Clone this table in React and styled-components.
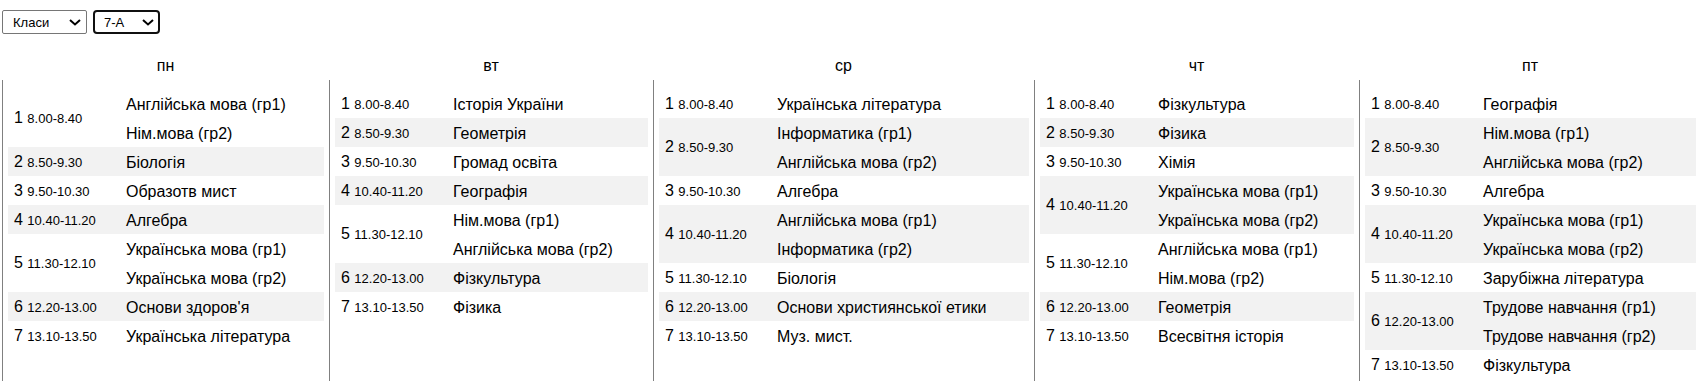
import React, { useState } from 'react';
import styled, { createGlobalStyle } from 'styled-components';

const GlobalStyle = createGlobalStyle`
html, body {
  margin: 0;
  padding: 0;
  background: #fff;
}
body {
  font-family: "Liberation Sans", Arial, sans-serif;
  color: #000;
}
`;

const Page = styled.div`
display: flex;
flex-direction: column;
min-height: 100vh;
padding: 10px 0 0 2px;
box-sizing: border-box;
`;

const Toolbar = styled.div`
display: flex;
gap: 6px;
height: 24px;
`;

const SelectWrap = styled.div`
position: relative;
width: ${({ $width }) => $width}px;
height: 24px;
`;

const Select = styled.select`
appearance: none;
width: 100%;
height: 100%;
box-sizing: border-box;
margin: 0;
padding: 0 0 0 ${({ $focused }) => ($focused ? 9 : 10)}px;
font-family: "Liberation Sans", Arial, sans-serif;
font-size: 13px;
color: #000;
background: #fff;
border: ${({ $focused }) => ($focused ? '2px solid #101010' : '1px solid #767676')};
border-radius: ${({ $focused }) => ($focused ? 4 : 2)}px;
outline: none;
`;

const Chevron = styled.svg`
position: absolute;
right: 6px;
top: 9px;
pointer-events: none;
`;

const Week = styled.div`
flex: 1;
display: grid;
grid-template-columns: 327px 324px 381px 325px 1fr;
`;

const DayColumn = styled.div`
display: flex;
flex-direction: column;
`;

const DayTitle = styled.div`
height: 46px;
box-sizing: border-box;
padding-top: 23px;
text-align: center;
font-size: 16px;
`;

const DayBody = styled.div`
flex: 1;
border-left: 1px solid #808080;
padding: 9px 5px 0 5px;
`;

const LessonRow = styled.div`
display: grid;
grid-template-columns: 118px 1fr;
background: ${({ $shaded }) => ($shaded ? '#f2f2f2' : 'transparent')};
`;

const TimeCell = styled.div`
align-self: center;
padding-left: 6px;
font-size: 16px;
white-space: nowrap;
`;

const TimeText = styled.span`
font-size: 13px;
`;

const SubjectList = styled.div`
display: flex;
flex-direction: column;
`;

const SubjectLine = styled.div`
height: 29px;
line-height: 32px;
font-size: 16px;
white-space: nowrap;
`;

const times = [
  '8.00-8.40',
  '8.50-9.30',
  '9.50-10.30',
  '10.40-11.20',
  '11.30-12.10',
  '12.20-13.00',
  '13.10-13.50',
];

const schedule = [
  {
    day: 'пн',
    lessons: [
      ['Англійська мова (гр1)', 'Нім.мова (гр2)'],
      ['Біологія'],
      ['Образотв мист'],
      ['Алгебра'],
      ['Українська мова (гр1)', 'Українська мова (гр2)'],
      ["Основи здоров'я"],
      ['Українська література'],
    ],
  },
  {
    day: 'вт',
    lessons: [
      ['Історія України'],
      ['Геометрія'],
      ['Громад освіта'],
      ['Географія'],
      ['Нім.мова (гр1)', 'Англійська мова (гр2)'],
      ['Фізкультура'],
      ['Фізика'],
    ],
  },
  {
    day: 'ср',
    lessons: [
      ['Українська література'],
      ['Інформатика (гр1)', 'Англійська мова (гр2)'],
      ['Алгебра'],
      ['Англійська мова (гр1)', 'Інформатика (гр2)'],
      ['Біологія'],
      ['Основи християнської етики'],
      ['Муз. мист.'],
    ],
  },
  {
    day: 'чт',
    lessons: [
      ['Фізкультура'],
      ['Фізика'],
      ['Хімія'],
      ['Українська мова (гр1)', 'Українська мова (гр2)'],
      ['Англійська мова (гр1)', 'Нім.мова (гр2)'],
      ['Геометрія'],
      ['Всесвітня історія'],
    ],
  },
  {
    day: 'пт',
    lessons: [
      ['Географія'],
      ['Нім.мова (гр1)', 'Англійська мова (гр2)'],
      ['Алгебра'],
      ['Українська мова (гр1)', 'Українська мова (гр2)'],
      ['Зарубіжна література'],
      ['Трудове навчання (гр1)', 'Трудове навчання (гр2)'],
      ['Фізкультура'],
    ],
  },
];

const ChevronIcon = () => (
  <Chevron width="12" height="7" viewBox="0 0 12 7">
    <path d="M1 1 L6 5.5 L11 1" fill="none" stroke="#000" strokeWidth="2" />
  </Chevron>
);

const App = () => {
  const [mode, setMode] = useState('classes');
  const [group, setGroup] = useState('7-А');

  return (
    <>
      <GlobalStyle />
      <Page>
        <Toolbar>
          <SelectWrap $width={85}>
            <Select value={mode} onChange={(e) => setMode(e.target.value)}>
              <option value="classes">Класи</option>
              <option value="teachers">Вчителі</option>
            </Select>
            <ChevronIcon />
          </SelectWrap>
          <SelectWrap $width={67}>
            <Select $focused value={group} onChange={(e) => setGroup(e.target.value)}>
              <option value="7-А">7-А</option>
              <option value="7-Б">7-Б</option>
            </Select>
            <ChevronIcon />
          </SelectWrap>
        </Toolbar>

        <Week>
          {schedule.map((col) => (
            <DayColumn key={col.day}>
              <DayTitle>{col.day}</DayTitle>
              <DayBody>
                {col.lessons.map((subjects, i) => (
                  <LessonRow key={i} $shaded={i % 2 === 1}>
                    <TimeCell>
                      {i + 1} <TimeText>{times[i]}</TimeText>
                    </TimeCell>
                    <SubjectList>
                      {subjects.map((s) => (
                        <SubjectLine key={s}>{s}</SubjectLine>
                      ))}
                    </SubjectList>
                  </LessonRow>
                ))}
              </DayBody>
            </DayColumn>
          ))}
        </Week>
      </Page>
    </>
  );
};

export default App;
